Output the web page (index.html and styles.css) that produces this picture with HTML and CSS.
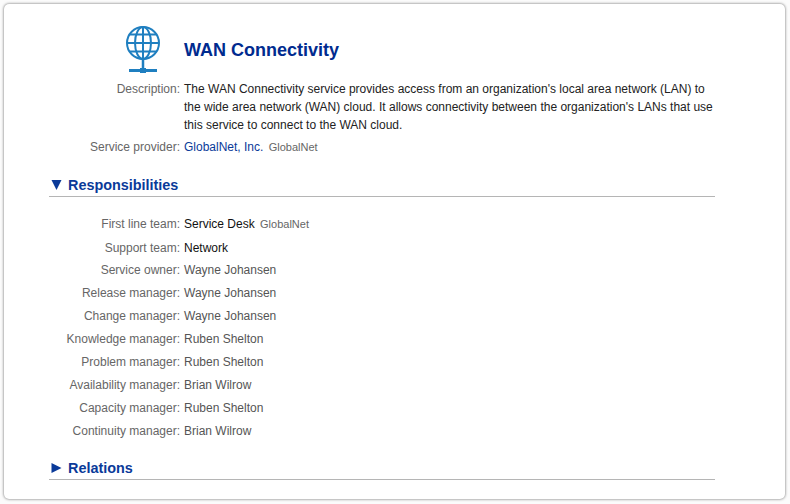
FILE: index.html
```html
<!DOCTYPE html>
<html>

<head>
    <title>WAN Connectivity</title>
    <link rel="stylesheet" href="styles.css">
</head>

<body>
    <div class="card">
        <div class="title-row">
            <div class="title-icon">
                <svg width="38" height="50" viewBox="0 0 38 50" fill="none" stroke="#1f7fc0" stroke-width="2">
                    <circle cx="19" cy="18" r="16" />
                    <ellipse cx="19" cy="18" rx="8" ry="16" />
                    <path d="M19 2V34M3 18H35M5.5 9.5H32.5M5.5 26.5H32.5" />
                    <path d="M19 34V44" stroke-width="2.5" />
                    <path d="M5 45.5H33" stroke-width="3" />
                    <rect x="16" y="43" width="6" height="5" fill="#1f7fc0" stroke="none" />
                </svg>
            </div>
            <h1>WAN Connectivity</h1>
        </div>

        <div class="row row-text">
            <div class="label">Description:</div>
            <div class="value">The WAN Connectivity service provides access from an organization's local area network (LAN) to the wide area network (WAN) cloud. It allows connectivity between the organization's LANs that use this service to connect to the WAN cloud.</div>
        </div>
        <div class="row">
            <div class="label">Service provider:</div>
            <div class="value"><a href="#">GlobalNet, Inc.</a> <span class="tag">GlobalNet</span></div>
        </div>

        <h2 class="section">
            <svg class="arrow" width="11" height="10" viewBox="0 0 11 10"><path d="M0.5 0H10.5L5.5 10Z" /></svg>
            Responsibilities
        </h2>
        <div class="people">
            <div class="row row-first">
                <div class="label">First line team:</div>
                <div class="value dark">Service Desk <span class="tag">GlobalNet</span></div>
            </div>
            <div class="row row-second">
                <div class="label">Support team:</div>
                <div class="value dark">Network</div>
            </div>
            <div class="row">
                <div class="label">Service owner:</div>
                <div class="value">Wayne Johansen</div>
            </div>
            <div class="row">
                <div class="label">Release manager:</div>
                <div class="value">Wayne Johansen</div>
            </div>
            <div class="row">
                <div class="label">Change manager:</div>
                <div class="value">Wayne Johansen</div>
            </div>
            <div class="row">
                <div class="label">Knowledge manager:</div>
                <div class="value">Ruben Shelton</div>
            </div>
            <div class="row">
                <div class="label">Problem manager:</div>
                <div class="value">Ruben Shelton</div>
            </div>
            <div class="row">
                <div class="label">Availability manager:</div>
                <div class="value">Brian Wilrow</div>
            </div>
            <div class="row">
                <div class="label">Capacity manager:</div>
                <div class="value">Ruben Shelton</div>
            </div>
            <div class="row">
                <div class="label">Continuity manager:</div>
                <div class="value">Brian Wilrow</div>
            </div>
        </div>

        <h2 class="section section-last">
            <svg class="arrow" width="11" height="10" viewBox="0 0 11 10"><path d="M0.5 0L10.5 5L0.5 10Z" /></svg>
            Relations
        </h2>
    </div>
</body>

</html>
```

FILE: styles.css
```css
html,
body {
    margin: 0;
    height: 100%;
}

body {
    font-family: "Liberation Sans", Arial, sans-serif;
    font-size: 12px;
    background: #fbfbfb;
    padding: 4px;
    box-sizing: border-box;
    overflow: hidden;
}

.card {
    box-sizing: border-box;
    width: 781px;
    height: 495px;
    background: #ffffff;
    border-radius: 5px;
    box-shadow: 0 0 3px rgba(0, 0, 0, 0.6);
    padding: 21px 70px 0 45px;
}

.title-row {
    display: flex;
    align-items: center;
    height: 50px;
    margin-bottom: 5px;
}

.title-icon {
    width: 135px;
    padding-left: 75px;
    box-sizing: border-box;
    display: flex;
}

h1 {
    margin: 0;
    font-size: 18px;
    font-weight: bold;
    color: #002b8f;
}

.row {
    display: flex;
    line-height: 23px;
    color: #555555;
}

.row-text {
    line-height: 18px;
    margin-bottom: 2px;
}

.row-text .value {
    color: #222222;
}

.row-first {
    line-height: 24px;
}

.row-second {
    padding-top: 2px;
    line-height: 21px;
}

.label {
    width: 131px;
    flex-shrink: 0;
    text-align: right;
    color: #666666;
}

.value {
    margin-left: 4px;
}

.value a {
    color: #0a3a99;
    text-decoration: none;
}

.dark {
    color: #111111;
}

.tag {
    font-size: 11px;
    color: #666666;
    margin-left: 2px;
}

.section {
    display: flex;
    align-items: center;
    gap: 6px;
    margin: 17px 0 0 0;
    padding: 0 0 2px 2px;
    font-size: 14.4px;
    line-height: 18px;
    font-weight: bold;
    color: #0a3a99;
    border-bottom: 1px solid #b5b5b5;
}

.section-last {
    margin-top: 16px;
}

.arrow {
    fill: #0a3a99;
    flex-shrink: 0;
}

.people {
    margin-top: 15px;
}
```
